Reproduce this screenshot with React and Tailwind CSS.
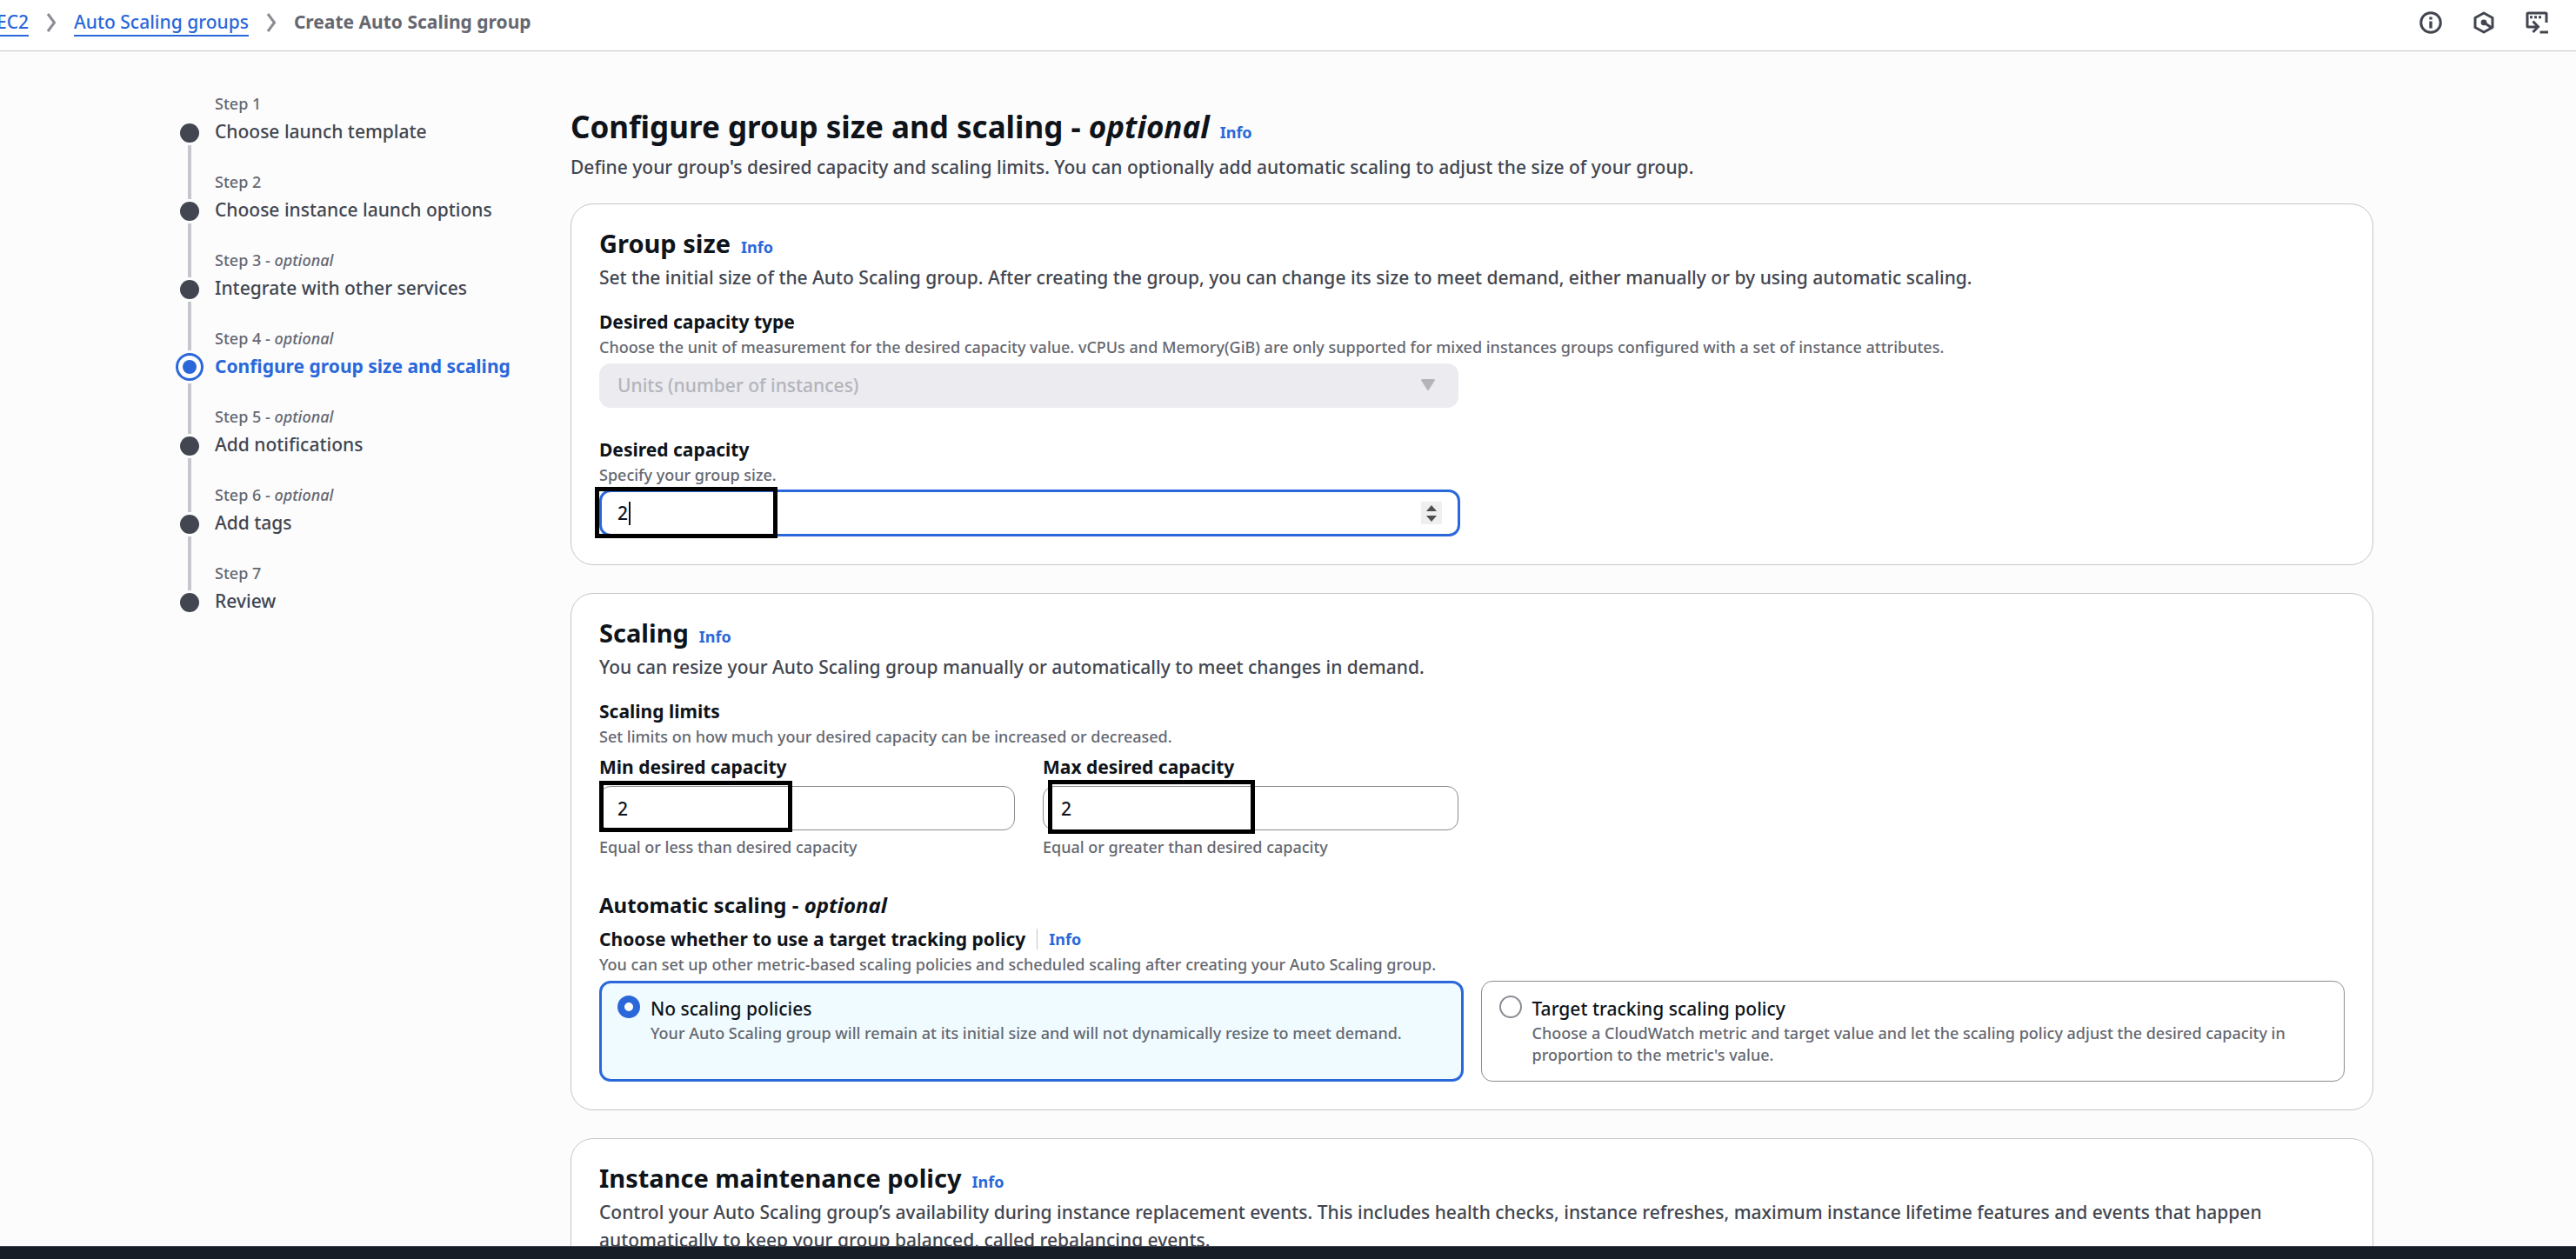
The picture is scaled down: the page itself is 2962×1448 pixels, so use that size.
import React from "react";

const STEPS = [
  { n: 1, title: "Choose launch template" },
  { n: 2, title: "Choose instance launch options" },
  { n: 3, title: "Integrate with other services", optional: true },
  { n: 4, title: "Configure group size and scaling", optional: true, active: true },
  { n: 5, title: "Add notifications", optional: true },
  { n: 6, title: "Add tags", optional: true },
  { n: 7, title: "Review" },
];

function Chevron() {
  return (
    <svg className="h-[22px] w-3 shrink-0" viewBox="0 0 12 22" fill="none" stroke="#8c8c94" strokeWidth="3" aria-hidden="true">
      <path d="M2 1 L9.5 11 L2 21" />
    </svg>
  );
}

function InfoIcon() {
  return (
    <svg className="size-[26px]" viewBox="0 0 26 26" fill="none" stroke="#424650" strokeWidth="3" aria-hidden="true">
      <circle cx="13" cy="13" r="11.3" />
      <path d="M13 11.5 V19.5" strokeWidth="3.4" />
      <path d="M13 6.5 V9.5" strokeWidth="3.4" />
    </svg>
  );
}

function HexagonIcon() {
  return (
    <svg className="size-[26px]" viewBox="0 0 26 26" fill="none" stroke="#424650" strokeWidth="3" aria-hidden="true">
      <path d="M13 2 L23 7.5 V18.5 L13 24 L3 18.5 V7.5 Z" strokeLinejoin="round" />
      <path d="M13 12.8 L22 19" />
      <circle cx="13" cy="12.8" r="3.4" fill="#424650" stroke="none" />
    </svg>
  );
}

function ShellIcon() {
  return (
    <svg className="size-[26px]" viewBox="0 0 26 26" fill="none" stroke="#424650" strokeWidth="3" aria-hidden="true">
      <path d="M24 13 V3 Q24 2 23 2 H3 Q2 2 2 3 V17 Q2 18 3 18 H13" />
      <path d="M8.5 11.5 L14.5 17.8 L8.5 24" />
      <path d="M5 6.7 H8 M10 6.7 H13 M15 6.7 H18" />
      <path d="M16.5 24 H26" />
    </svg>
  );
}

function Info({ className = "" }) {
  return (
    <a href="#info" className={`text-[18px] leading-none font-bold text-[#2a68da] ${className}`}>
      Info
    </a>
  );
}

function Step({ step, last }) {
  return (
    <li className="flex">
      <div className="flex w-8 shrink-0 flex-col items-center">
        {step.n === 1 ? (
          <span className="h-8" />
        ) : (
          <span className={step.active ? "h-[26px] w-1 bg-[#c6c6cd]" : "h-8 w-1 bg-[#c6c6cd]"} />
        )}
        {step.active ? (
          <span className="my-[3px] flex size-8 items-center justify-center rounded-full border-3 border-[#2a68da] bg-white">
            <span className="size-4 rounded-full bg-[#2a68da]" />
          </span>
        ) : (
          <span className="my-[3px] size-[22px] rounded-full bg-[#424650]" />
        )}
        {!last && <span className="w-1 flex-1 bg-[#c6c6cd]" />}
      </div>
      <div className="h-[90px] pl-[13px]">
        <div className="text-[18px] leading-6 font-medium text-[#656871]">
          Step {step.n}
          {step.optional && (
            <>
              {" - "}
              <em>optional</em>
            </>
          )}
        </div>
        <a
          href={`#step-${step.n}`}
          aria-current={step.active ? "step" : undefined}
          className={
            step.active
              ? "block text-[21px] leading-[41px] font-bold whitespace-nowrap text-[#2a68da]"
              : "block text-[21px] leading-[41px] font-medium whitespace-nowrap text-[#424650]"
          }
        >
          {step.title}
        </a>
      </div>
    </li>
  );
}

function Card({ title, description, children }) {
  return (
    <section className="rounded-[26px] border border-[#c6c6cd] bg-white px-8 pt-[26px] pb-8">
      <h2 className="text-[29px] leading-[38px] font-bold text-[#0f141a]">
        {title}
        <Info className="ml-3" />
      </h2>
      <p className="mt-1 text-[21px] leading-8 font-medium text-[#424650]">{description}</p>
      {children}
    </section>
  );
}

const LABEL = "block text-[21px] leading-8 font-bold text-[#0f141a]";
const HINT = "mt-px text-[18px] leading-[25px] font-medium text-[#656871]";

function Mark({ className }) {
  return <span aria-hidden="true" className={`pointer-events-none absolute border-5 border-black ${className}`} />;
}

function LimitField({ id, label, hint, mark }) {
  return (
    <div className="flex-1">
      <label htmlFor={id} className={LABEL}>
        {label}
      </label>
      <div className="relative mt-[6px] mb-[7px]">
        <input
          id={id}
          defaultValue="2"
          inputMode="numeric"
          aria-describedby={`${id}-hint`}
          className="block h-[51px] w-full rounded-[13px] border border-[#8c8c94] bg-white px-5 text-[21px] font-medium text-[#0f141a]"
        />
        <Mark className={mark} />
      </div>
      <p id={`${id}-hint`} className={HINT}>
        {hint}
      </p>
    </div>
  );
}

function Tile({ id, title, description, checked }) {
  return (
    <label
      htmlFor={id}
      className={
        checked
          ? "flex flex-1 gap-3 rounded-[13px] border-3 border-[#2a68da] bg-[#f0fbff] pt-[14px] pr-[16px] pb-[15px] pl-[18px]"
          : "flex flex-1 gap-3 rounded-[13px] border border-[#8c8c94] bg-white pt-[16px] pr-[18px] pb-[17px] pl-[20px]"
      }
    >
      <input
        id={id}
        type="radio"
        name="policy"
        defaultChecked={checked}
        className="size-[26px] shrink-0 appearance-none rounded-full border-2 border-[#8c8c94] bg-white checked:border-8 checked:border-[#2a68da]"
      />
      <span>
        <span className="block text-[21px] leading-[30px] font-medium text-[#0f141a]">{title}</span>
        <span className={`block ${HINT}`}>{description}</span>
      </span>
    </label>
  );
}

export default function App() {
  return (
    <div className="flex h-screen flex-col overflow-hidden bg-[#fcfcfd] font-['Noto_Sans',sans-serif]">
      <header className="flex shrink-0 items-center justify-between border-b border-[#c6c6cd] bg-white pr-8 pb-[6px]">
        <nav aria-label="Breadcrumbs" className="-ml-1 flex h-[52px] items-center gap-5 text-[21px] font-medium">
          <a href="#ec2" className="border-b-2 border-[#2a68da] leading-[30px] text-[#2a68da]">
            EC2
          </a>
          <Chevron />
          <a href="#groups" className="border-b-2 border-[#2a68da] leading-[30px] text-[#2a68da]">
            Auto Scaling groups
          </a>
          <Chevron />
          <span className="font-bold text-[#656871]">Create Auto Scaling group</span>
        </nav>
        <div className="flex items-center gap-[35px]">
          <button type="button" aria-label="Info">
            <InfoIcon />
          </button>
          <button type="button" aria-label="Diagnose">
            <HexagonIcon />
          </button>
          <button type="button" aria-label="CloudShell">
            <ShellIcon />
          </button>
        </div>
      </header>

      <div className="flex min-h-0 flex-1 overflow-hidden pr-[233px] pl-[202px]">
        <aside className="w-[454px] shrink-0 pt-[48px]">
          <ol>
            {STEPS.map((s) => (
              <Step key={s.n} step={s} last={s.n === 7} />
            ))}
          </ol>
        </aside>

        <main className="min-w-0 flex-1 pt-[63px]">
          <h1 className="text-[35px] leading-[48px] font-bold text-[#0f141a]">
            Configure group size and scaling - <em>optional</em>
            <Info className="ml-3" />
          </h1>
          <p className="mt-[6px] text-[21px] leading-8 font-medium text-[#424650]">
            Define your group's desired capacity and scaling limits. You can optionally add automatic scaling to adjust
            the size of your group.
          </p>

          <div className="mt-[26px] flex flex-col gap-8">
            <Card
              title="Group size"
              description="Set the initial size of the Auto Scaling group. After creating the group, you can change its size to meet demand, either manually or by using automatic scaling."
            >
              <div className="mt-[19px]">
                <label htmlFor="type" className={LABEL}>
                  Desired capacity type
                </label>
                <p className={HINT}>
                  Choose the unit of measurement for the desired capacity value. vCPUs and Memory(GiB) are only
                  supported for mixed instances groups configured with a set of instance attributes.
                </p>
                <div className="relative mt-[6px] max-w-[988px]">
                  <select
                    id="type"
                    disabled
                    className="block h-[51px] w-full appearance-none rounded-[13px] bg-[#ebebf0] px-[21px] text-[21px] font-medium text-[#b4b4bb] opacity-100"
                  >
                    <option>Units (number of instances)</option>
                  </select>
                  <svg className="pointer-events-none absolute top-[18px] right-[27px] h-[13px] w-4" viewBox="0 0 16 13" aria-hidden="true">
                    <path d="M1 1 H15 L8 12 Z" fill="#b4b4bb" stroke="#b4b4bb" strokeWidth="2" strokeLinejoin="round" />
                  </svg>
                </div>
              </div>
              <div className="mt-8">
                <label htmlFor="capacity" className={LABEL}>
                  Desired capacity
                </label>
                <p className={HINT}>Specify your group size.</p>
                <div className="relative mt-1 max-w-[990px]">
                  <input
                    id="capacity"
                    defaultValue="2"
                    inputMode="numeric"
                    className="block h-[54px] w-full rounded-[13px] border-3 border-[#2a68da] bg-white px-[18px] text-[21px] font-medium text-[#0f141a]"
                  />
                  <span aria-hidden="true" className="absolute top-[14px] left-[34px] h-[27px] w-[2px] bg-[#0f141a]" />
                  <div className="absolute top-[14px] right-[21px] flex h-[26px] w-6 flex-col items-center justify-center gap-[5px] bg-[#efefef]">
                    <button type="button" aria-label="Increase" className="block">
                      <svg className="h-[7px] w-3" viewBox="0 0 12 7">
                        <path d="M6 0 L12 7 H0 Z" fill="#505050" />
                      </svg>
                    </button>
                    <button type="button" aria-label="Decrease" className="block">
                      <svg className="h-[7px] w-3" viewBox="0 0 12 7">
                        <path d="M0 0 H12 L6 7 Z" fill="#505050" />
                      </svg>
                    </button>
                  </div>
                  <Mark className="-top-[3px] -left-[5px] h-[59px] w-[210px]" />
                </div>
              </div>
            </Card>

            <Card
              title="Scaling"
              description="You can resize your Auto Scaling group manually or automatically to meet changes in demand."
            >
              <div className="mt-[19px]">
                <h3 className={LABEL}>Scaling limits</h3>
                <p className={HINT}>Set limits on how much your desired capacity can be increased or decreased.</p>
                <div className="mt-[6px] flex max-w-[988px] gap-8">
                  <LimitField
                    id="min"
                    label="Min desired capacity"
                    hint="Equal or less than desired capacity"
                    mark="-top-[6px] left-0 h-[59px] w-[222px]"
                  />
                  <LimitField
                    id="max"
                    label="Max desired capacity"
                    hint="Equal or greater than desired capacity"
                    mark="-top-[7px] left-[6px] h-[62px] w-[238px]"
                  />
                </div>
              </div>
              <h3 className="mt-[38px] text-[24px] leading-8 font-bold text-[#0f141a]">
                Automatic scaling - <em>optional</em>
              </h3>
              <div className="mt-[7px] flex items-center">
                <span id="policy-label" className={LABEL}>
                  Choose whether to use a target tracking policy
                </span>
                <span className="ml-[13px] h-6 w-px bg-[#c6c6cd]" />
                <Info className="ml-[13px]" />
              </div>
              <p className={HINT}>
                You can set up other metric-based scaling policies and scheduled scaling after creating your Auto
                Scaling group.
              </p>
              <div role="radiogroup" aria-labelledby="policy-label" className="mt-[6px] flex gap-5">
                <Tile
                  id="none"
                  checked
                  title="No scaling policies"
                  description="Your Auto Scaling group will remain at its initial size and will not dynamically resize to meet demand."
                />
                <Tile
                  id="target"
                  title="Target tracking scaling policy"
                  description="Choose a CloudWatch metric and target value and let the scaling policy adjust the desired capacity in proportion to the metric's value."
                />
              </div>
            </Card>

            <Card
              title="Instance maintenance policy"
              description="Control your Auto Scaling group’s availability during instance replacement events. This includes health checks, instance refreshes, maximum instance lifetime features and events that happen automatically to keep your group balanced, called rebalancing events."
            />
          </div>
        </main>
      </div>

      <footer className="h-[15px] shrink-0 border-t border-[#424650] bg-[#161d26]" />
    </div>
  );
}
